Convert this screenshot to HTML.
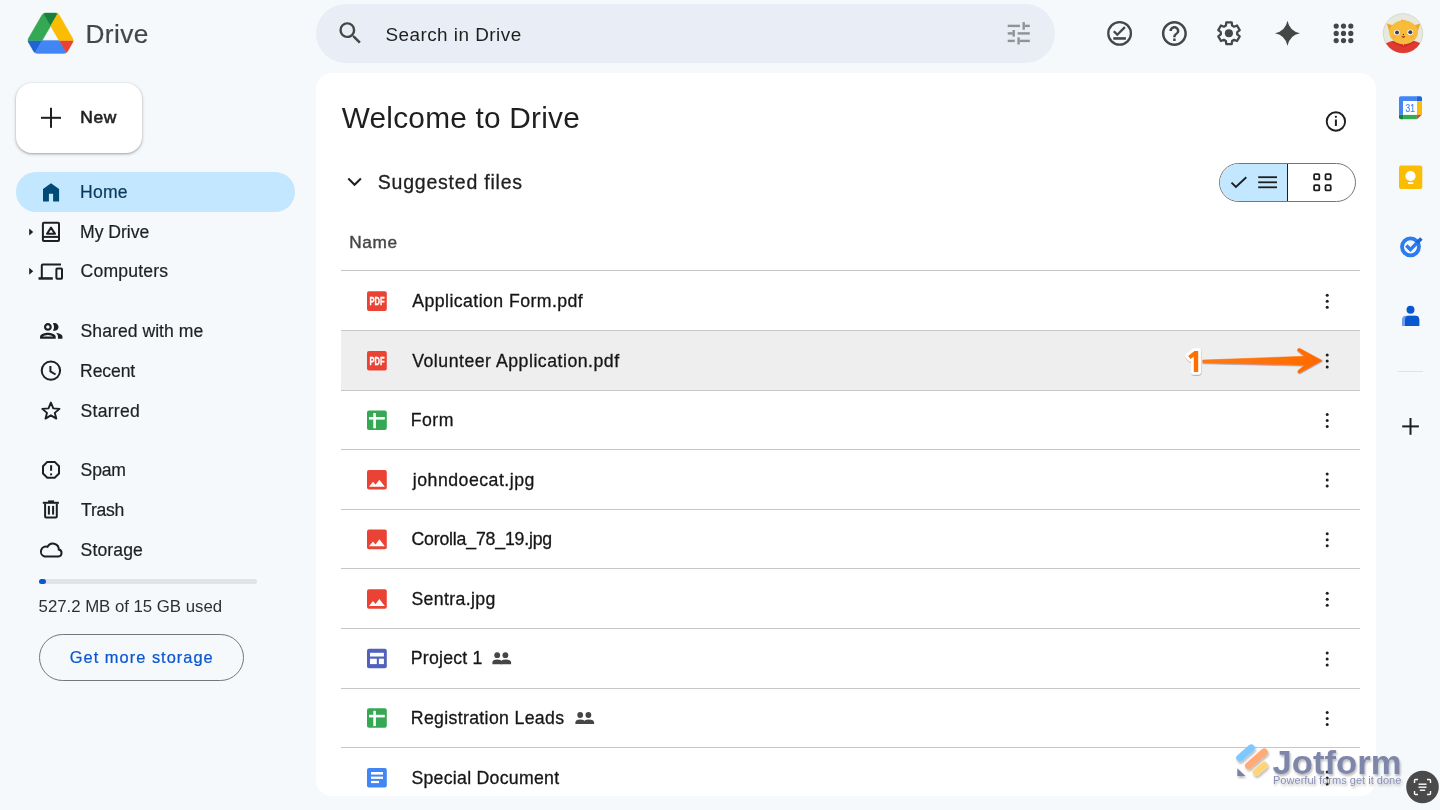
<!DOCTYPE html>
<html><head><meta charset="utf-8">
<style>
*{box-sizing:border-box;margin:0;padding:0}
html,body{width:1440px;height:810px;overflow:hidden;background:#f6f9fc;font-family:"Liberation Sans",sans-serif;color:#1f1f1f}
.abs{position:absolute}
.t{position:absolute;white-space:nowrap;line-height:1;will-change:transform}
svg{position:absolute;display:block;overflow:visible}
</style></head><body>

<!-- Search bar -->
<div class="abs" style="left:316px;top:4px;width:739px;height:59px;border-radius:29.5px;background:#e9eef6"></div>

<!-- New button -->
<div class="abs" style="left:16px;top:83px;width:126px;height:70px;border-radius:16px;background:#fff;box-shadow:0 1px 2px rgba(60,64,67,.3),0 1px 3px 1px rgba(60,64,67,.15)"></div>

<!-- Home pill -->
<div class="abs" style="left:16px;top:172px;width:279px;height:40px;border-radius:20px;background:#c2e7ff"></div>

<!-- storage bar -->
<div class="abs" style="left:38.5px;top:579px;width:218px;height:5px;border-radius:3px;background:#e3e3e3"></div>
<div class="abs" style="left:38.5px;top:579px;width:7.5px;height:5px;border-radius:3px;background:#0b57d0"></div>
<!-- get more storage btn -->
<div class="abs" style="left:38.5px;top:634px;width:205px;height:47px;border-radius:24px;border:1px solid #747775"></div>

<!-- Main card -->
<div class="abs" style="left:316px;top:73px;width:1060px;height:723.3px;border-radius:16px;background:#fff"></div>

<!-- highlighted row -->
<div class="abs" style="left:341px;top:330.5px;width:1019px;height:59.6px;background:#eeeeee"></div>
<!-- dividers -->
<div class="abs" style="left:341px;top:270.46px;width:1019px;height:1px;background:#c7c7c7"></div>
<div class="abs" style="left:341px;top:330.03px;width:1019px;height:1px;background:#c7c7c7"></div>
<div class="abs" style="left:341px;top:389.6px;width:1019px;height:1px;background:#c7c7c7"></div>
<div class="abs" style="left:341px;top:449.17px;width:1019px;height:1px;background:#c7c7c7"></div>
<div class="abs" style="left:341px;top:508.74px;width:1019px;height:1px;background:#c7c7c7"></div>
<div class="abs" style="left:341px;top:568.3px;width:1019px;height:1px;background:#c7c7c7"></div>
<div class="abs" style="left:341px;top:627.9px;width:1019px;height:1px;background:#c7c7c7"></div>
<div class="abs" style="left:341px;top:687.5px;width:1019px;height:1px;background:#c7c7c7"></div>
<div class="abs" style="left:341px;top:747.0px;width:1019px;height:1px;background:#c7c7c7"></div>

<!-- view toggle -->
<div class="abs" style="left:1219px;top:162.5px;width:137px;height:39.5px;border-radius:20px;border:1px solid #747775;overflow:hidden;background:#fff">
  <div class="abs" style="left:0;top:0;width:68px;height:100%;background:#c2e7ff;border-right:1px solid #1f1f1f"></div>
</div>

<!-- right panel divider -->
<div class="abs" style="left:1398px;top:371px;width:25px;height:1px;background:#dde3ea"></div>

<!-- Drive logo -->
<svg style="left:28.3px;top:12.8px" width="45.2" height="40.4" viewBox="0 0 87.3 78">
<path d="m6.6 66.85 3.85 6.65c.8 1.4 1.95 2.5 3.3 3.3l13.75-23.8h-27.5c0 1.55.4 3.1 1.2 4.5z" fill="#1e64d2" stroke="#1e64d2" stroke-width="0.8"/>
<path d="m43.65 25-13.75-23.8c-1.35.8-2.5 1.9-3.3 3.3l-25.4 44a9.06 9.06 0 0 0 -1.2 4.5h27.5z" fill="#34a853" stroke="#34a853" stroke-width="0.8"/>
<path d="m73.55 76.8c1.35-.8 2.5-1.9 3.3-3.3l1.6-2.75 7.65-13.25c.8-1.4 1.2-2.95 1.2-4.5h-27.502l5.852 11.5z" fill="#ea4335" stroke="#ea4335" stroke-width="0.8"/>
<path d="m43.65 25 13.75-23.8c-1.35-.8-2.9-1.2-4.5-1.2h-18.5c-1.6 0-3.15.45-4.5 1.2z" fill="#188038" stroke="#188038" stroke-width="0.8"/>
<path d="m59.8 53h-32.3l-13.75 23.8c1.35.8 2.9 1.2 4.5 1.2h50.8c1.6 0 3.15-.45 4.5-1.2z" fill="#4285f4" stroke="#4285f4" stroke-width="0.8"/>
<path d="m73.4 26.5-12.7-22c-.8-1.4-1.95-2.5-3.3-3.3l-13.75 23.8 16.15 28h27.45c0-1.55-.4-3.1-1.2-4.5z" fill="#fbbc04" stroke="#fbbc04" stroke-width="0.8"/>
</svg>

<!-- page-coordinate icon layer -->
<svg style="left:0;top:0;will-change:transform" width="1440" height="810" viewBox="0 0 1440 810">
  <!-- search icon -->
  <path transform="translate(335.7 18.5) scale(1.224)" fill="#444746" d="M15.5 14h-.79l-.28-.27A6.471 6.471 0 0 0 16 9.5 6.5 6.5 0 1 0 9.5 16c1.61 0 3.09-.59 4.23-1.57l.27.28v.79l5 4.99L20.49 19l-4.99-5zm-6 0C7.01 14 5 11.99 5 9.5S7.01 5 9.5 5 14 7.01 14 9.5 11.99 14 9.5 14z"/>
  <!-- tune icon -->
  <g fill="#8f9296">
    <rect x="1007.7" y="24.7" width="12.3" height="2.4"/><rect x="1024.9" y="24.7" width="4.9" height="2.4"/><rect x="1022.5" y="22.1" width="2.4" height="7.6"/>
    <rect x="1007.7" y="32.2" width="5" height="2.4"/><rect x="1012.5" y="30" width="2.4" height="6.6"/><rect x="1017.6" y="32.2" width="12.2" height="2.4"/>
    <rect x="1007.7" y="39.7" width="7.1" height="2.4"/><rect x="1017.4" y="37.4" width="2.4" height="7.1"/><rect x="1019.8" y="39.7" width="10" height="2.4"/>
  </g>
  <!-- offline icon -->
  <g stroke="#444746" fill="none" stroke-width="2.3">
    <circle cx="1119.6" cy="33.4" r="11.3"/>
    <polyline points="1113.8,31.2 1117.3,34.7 1124.9,27.1"/>
    <line x1="1113.3" y1="38.45" x2="1125.9" y2="38.45" stroke-width="2.6"/>
  </g>
  <!-- help icon -->
  <path transform="translate(1159.4 18.4) scale(1.25)" fill="#444746" d="M11 18h2v-2h-2v2zm1-16C6.48 2 2 6.48 2 12s4.48 10 10 10 10-4.48 10-10S17.52 2 12 2zm0 18c-4.41 0-8-3.59-8-8s3.59-8 8-8 8 3.59 8 8-3.59 8-8 8zm0-14c-2.21 0-4 1.79-4 4h2c0-1.1.9-2 2-2s2 .9 2 2c0 2-3 1.75-3 5h2c0-2.25 3-2.5 3-5 0-2.21-1.79-4-4-4z"/>
  <!-- gear icon -->
  <path fill="none" stroke="#444746" stroke-width="2.3" stroke-linejoin="round" d="M1225.89 25.55 L1226.30 22.43 L1231.70 22.43 L1232.11 25.55 L1234.11 26.71 L1237.02 25.50 L1239.72 30.18 L1237.22 32.09 L1237.22 34.41 L1239.72 36.32 L1237.02 41.00 L1234.11 39.79 L1232.11 40.95 L1231.70 44.07 L1226.30 44.07 L1225.89 40.95 L1223.89 39.79 L1220.98 41.00 L1218.28 36.32 L1220.78 34.41 L1220.78 32.09 L1218.28 30.18 L1220.98 25.50 L1223.89 26.71z"/>
  <circle cx="1228.9" cy="33.3" r="4.05" fill="#444746"/>
  <!-- sparkle -->
  <path transform="translate(1275 20.8) scale(1.04)" fill="#444746" d="M12 0Q14 10 24 12Q14 14 12 24Q10 14 0 12Q10 10 12 0z"/>
  <!-- apps grid -->
  <g fill="#444746">
    <circle cx="1336.2" cy="26.1" r="2.6"/><circle cx="1343.5" cy="26.1" r="2.6"/><circle cx="1350.8" cy="26.1" r="2.6"/>
    <circle cx="1336.2" cy="33.4" r="2.6"/><circle cx="1343.5" cy="33.4" r="2.6"/><circle cx="1350.8" cy="33.4" r="2.6"/>
    <circle cx="1336.2" cy="40.6" r="2.6"/><circle cx="1343.5" cy="40.6" r="2.6"/><circle cx="1350.8" cy="40.6" r="2.6"/>
  </g>
  <!-- avatar -->
  <defs><clipPath id="av"><circle cx="1403" cy="33.4" r="19.7"/></clipPath></defs>
  <circle cx="1403" cy="33.4" r="19.7" fill="#e7e9de" stroke="#cfd2c4" stroke-width="0.8"/>
  <g clip-path="url(#av)">
    <path d="M1384 45 Q1390 39.5 1403.4 40 Q1417 39.5 1422 45 L1423 56 L1383 56z" fill="#e03a30"/>
    <path d="M1393 42 L1403.4 46.5 L1414 42" fill="none" stroke="#b8282a" stroke-width="0.9"/><path d="M1402.4 43.5 L1403.4 46 L1404.4 43.5z" fill="#f5a524"/>
    <path d="M1386.8 23.4 L1395 26 L1390 34z" fill="#f5a524"/>
    <path d="M1420.3 23.6 L1412 26 L1417 34z" fill="#f5a524"/>
    <ellipse cx="1403.6" cy="32.3" rx="14.4" ry="11.8" fill="#f7bd3a"/>
    <path d="M1400.5 21 L1402.2 19.2 L1403.6 20.8 L1405.2 19.8 L1406 21.2z" fill="#f5a524"/>
    <circle cx="1396.9" cy="32.5" r="2.8" fill="#fff"/><circle cx="1410.2" cy="32.2" r="2.8" fill="#fff"/>
    <circle cx="1397" cy="32.6" r="2" fill="#3a3f55"/><circle cx="1410.3" cy="32.3" r="2" fill="#3a3f55"/>
    <circle cx="1403.4" cy="34.6" r="0.7" fill="#222"/>
    <path d="M1401.3 36.3 Q1403.4 39.4 1405.5 36.3z" fill="#a8232b"/>
    <circle cx="1393.9" cy="36.7" r="2" fill="#f6a55a" opacity=".6"/><circle cx="1412.3" cy="36.7" r="2" fill="#f6a55a" opacity=".6"/>
  </g>

  <!-- New plus -->
  <g fill="#1f1f1f"><rect x="41" y="116.8" width="20" height="2"/><rect x="50" y="107.8" width="2" height="20"/></g>

  <!-- nav icons -->
  <path fill="#004a77" d="M43 189.1 L51 183.2 L59.1 189.1 V201.5 H53.1 V193.7 H48.9 V201.5 H43z"/>
  <!-- triangles -->
  <path fill="#1f1f1f" d="M29.2 228.4 L33.2 232 L29.2 235.6z"/>
  <path fill="#1f1f1f" d="M29.2 267.8 L33.2 271.3 L29.2 274.8z"/>
  <!-- my drive -->
  <g fill="none" stroke="#1f1f1f" stroke-width="2">
    <rect x="42.9" y="222.7" width="16.1" height="18.2" rx="1"/>
    <line x1="43" y1="236.9" x2="59" y2="236.9"/>
  </g>
  <path fill="none" stroke="#1f1f1f" stroke-width="2" stroke-linejoin="round" d="M51 227.6 L55 233.8 H47z"/>
  <!-- computers -->
  <g fill="none" stroke="#1f1f1f" stroke-width="2">
    <path d="M41.8 278.4 V265.6 Q41.8 264.6 42.8 264.6 H61"/>
    <rect x="56.4" y="268.5" width="5.6" height="10.2" rx="0.8"/>
  </g>
  <rect x="38.5" y="277.2" width="14.3" height="2.5" fill="#1f1f1f"/>
  <!-- shared -->
  <path transform="translate(37.8 317.4) scale(1.12)" fill="#1f1f1f" d="M9 13.75c-2.34 0-7 1.17-7 3.5V19h14v-1.75c0-2.330-4.66-3.5-7-3.5zM4.34 17c.84-.58 2.87-1.25 4.66-1.250s3.82.67 4.66 1.25H4.34zM9 12c1.93 0 3.5-1.57 3.5-3.5S10.93 5 9 5 5.5 6.57 5.5 8.5 7.07 12 9 12zm0-5c.83 0 1.5.67 1.5 1.5S9.83 10 9 10s-1.5-.67-1.5-1.5S8.170 7 9 7zm7.04 6.81c1.16.84 1.96 1.96 1.96 3.44V19h4v-1.75c0-2.02-3.5-3.17-5.96-3.44zM15 12c1.93 0 3.5-1.57 3.5-3.5S16.93 5 15 5c-.54 0-1.04.13-1.5.35.63.89 1 1.98 1 3.15s-.37 2.26-1 3.15c.46.22.96.35 1.5.35z"/>
  <!-- clock -->
  <g fill="none" stroke="#1f1f1f" stroke-width="2">
    <circle cx="50.9" cy="370.6" r="9.2"/>
    <polyline points="50.4,366 50.4,371.4 55.6,374.5"/>
  </g>
  <!-- star -->
  <path fill="none" stroke="#1f1f1f" stroke-width="1.9" stroke-linejoin="round" d="M50.9 402.6 L53.3 408.4 L59.5 408.9 L54.8 412.9 L56.3 418.6 L50.9 415.4 L45.5 418.6 L47 412.9 L42.3 408.9 L48.5 408.4z"/>
  <!-- spam -->
  <path fill="none" stroke="#1f1f1f" stroke-width="2" d="M47.3 461.9 H54.7 L59 466.2 V473.5 L54.7 477.7 H47.3 L43 473.5 V466.2z"/>
  <rect x="50.1" y="465.2" width="2" height="5.6" fill="#1f1f1f"/>
  <rect x="50.1" y="473.4" width="2" height="1.9" fill="#1f1f1f"/>
  <!-- trash -->
  <g fill="none" stroke="#1f1f1f" stroke-width="2">
    <path d="M45.1 503.5 V516.6 Q45.1 517.6 46.1 517.6 H55.8 Q56.8 517.6 56.8 516.6 V503.5"/>
    <line x1="42.8" y1="502.8" x2="58.9" y2="502.8"/>
    <line x1="48.9" y1="505.9" x2="48.9" y2="514.6"/><line x1="53.1" y1="505.9" x2="53.1" y2="514.6"/>
  </g>
  <rect x="48.1" y="500.4" width="6" height="2" fill="#1f1f1f"/>
  <!-- cloud -->
  <path fill="none" stroke="#1f1f1f" stroke-width="2" d="M44.5 556.5 H58.4 A3.5 3.5 0 0 0 58.8 549.6 A6 6 0 0 0 47.5 546.8 A4.9 4.9 0 0 0 44.5 556.5z"/>

  <!-- main chevron -->
  <polyline points="348.3,178.5 354.6,184.8 360.9,178.5" fill="none" stroke="#1f1f1f" stroke-width="2"/>
  <!-- info icon -->
  <circle cx="1335.9" cy="121.5" r="9.2" fill="none" stroke="#1f1f1f" stroke-width="1.9"/>
  <rect x="1334.9" y="119.5" width="2" height="6.5" fill="#1f1f1f"/>
  <circle cx="1335.9" cy="116.8" r="1.15" fill="#1f1f1f"/>
  <!-- toggle icons -->
  <polyline points="1231.5,182.6 1235.9,187 1246.3,177.3" fill="none" stroke="#1f1f1f" stroke-width="1.9"/>
  <g fill="#1f1f1f"><rect x="1258.2" y="176.3" width="18.8" height="1.8"/><rect x="1258.2" y="181.4" width="18.8" height="1.8"/><rect x="1258.2" y="186.4" width="18.8" height="1.8"/></g>
  <g fill="none" stroke="#1f1f1f" stroke-width="1.8">
    <rect x="1314.1" y="174.2" width="5.2" height="5.2" rx="1"/><rect x="1325.5" y="174.2" width="5.2" height="5.2" rx="1"/>
    <rect x="1314.1" y="185.2" width="5.2" height="5.2" rx="1"/><rect x="1325.5" y="185.2" width="5.2" height="5.2" rx="1"/>
  </g>

  <!-- file icons -->
  <!-- pdf -->
  <g><rect x="367" y="291.3" width="19.8" height="19.6" rx="2" fill="#ea4335"/>
  <text x="377" y="305.2" font-family="Liberation Sans" font-weight="bold" font-size="10.2" fill="#fff" stroke="#fff" stroke-width="0.3" text-anchor="middle" textLength="15" lengthAdjust="spacingAndGlyphs">PDF</text></g>
  <rect x="367" y="351" width="19.8" height="19.6" rx="2" fill="#ea4335"/>
  <text x="377" y="364.9" font-family="Liberation Sans" font-weight="bold" font-size="10.2" fill="#fff" stroke="#fff" stroke-width="0.3" text-anchor="middle" textLength="15" lengthAdjust="spacingAndGlyphs">PDF</text>
  <!-- sheets -->
  <rect x="367" y="410.5" width="19.8" height="19.4" rx="2" fill="#34a853"/>
  <rect x="369" y="417" width="15.8" height="2.6" fill="#fff"/><rect x="373.3" y="413" width="2.6" height="15.3" fill="#fff"/>
  <!-- images -->
  <g><rect x="367" y="470" width="19.8" height="19.6" rx="2" fill="#ea4335"/>
  <path d="M369 486.7 L373 481.8 L375.5 484.8 L379.4 479.7 L384.8 486.7z" fill="#fff"/></g>
  <g transform="translate(0 59.6)"><rect x="367" y="470" width="19.8" height="19.6" rx="2" fill="#ea4335"/>
  <path d="M369 486.7 L373 481.8 L375.5 484.8 L379.4 479.7 L384.8 486.7z" fill="#fff"/></g>
  <g transform="translate(0 119.2)"><rect x="367" y="470" width="19.8" height="19.6" rx="2" fill="#ea4335"/>
  <path d="M369 486.7 L373 481.8 L375.5 484.8 L379.4 479.7 L384.8 486.7z" fill="#fff"/></g>
  <!-- project (purple) -->
  <rect x="367" y="648.7" width="19.8" height="19.5" rx="2" fill="#5262bc"/>
  <rect x="370" y="652.8" width="13.9" height="3.7" fill="#fff"/>
  <rect x="370" y="658.7" width="6.8" height="5.4" fill="#fff"/><rect x="378.9" y="658.7" width="5" height="5.4" fill="#fff"/>
  <!-- sheets 2 -->
  <rect x="367" y="708.3" width="19.8" height="19.4" rx="2" fill="#34a853"/>
  <rect x="369" y="714.8" width="15.8" height="2.6" fill="#fff"/><rect x="373.3" y="710.8" width="2.6" height="15.3" fill="#fff"/>
  <!-- docs -->
  <rect x="367" y="767.9" width="19.8" height="19.7" rx="2" fill="#4285f4"/>
  <rect x="371" y="772" width="12" height="2.6" fill="#fff"/><rect x="371" y="776.6" width="12" height="2.3" fill="#fff"/><rect x="371" y="780.9" width="8" height="2.2" fill="#fff"/>
  <!-- shared people icons -->
  <g fill="#444746">
    <circle cx="497.2" cy="655.2" r="2.9"/><circle cx="505.4" cy="655.2" r="2.9"/>
    <path d="M492.4 664.2 V662.6 Q492.4 659.6 497.2 659.6 Q502 659.6 502 662.6 V664.2z"/>
    <path d="M500.8 664.2 V662.6 Q500.8 659.6 505.6 659.6 Q511.1 659.6 511.1 662.6 V664.2z"/>
  </g>
  <g transform="translate(83 59.8)" fill="#444746">
    <circle cx="497.2" cy="655.2" r="2.9"/><circle cx="505.4" cy="655.2" r="2.9"/>
    <path d="M492.4 664.2 V662.6 Q492.4 659.6 497.2 659.6 Q502 659.6 502 662.6 V664.2z"/>
    <path d="M500.8 664.2 V662.6 Q500.8 659.6 505.6 659.6 Q511.1 659.6 511.1 662.6 V664.2z"/>
  </g>

  <!-- kebabs -->
  <g fill="#1f1f1f"><circle cx="1327.2" cy="295.3" r="1.5"/><circle cx="1327.2" cy="301.3" r="1.5"/><circle cx="1327.2" cy="307.3" r="1.5"/></g>
  <g transform="translate(0 59.6)" fill="#1f1f1f"><circle cx="1327.2" cy="295.3" r="1.5"/><circle cx="1327.2" cy="301.3" r="1.5"/><circle cx="1327.2" cy="307.3" r="1.5"/></g><g transform="translate(0 119.2)" fill="#1f1f1f"><circle cx="1327.2" cy="295.3" r="1.5"/><circle cx="1327.2" cy="301.3" r="1.5"/><circle cx="1327.2" cy="307.3" r="1.5"/></g><g transform="translate(0 178.8)" fill="#1f1f1f"><circle cx="1327.2" cy="295.3" r="1.5"/><circle cx="1327.2" cy="301.3" r="1.5"/><circle cx="1327.2" cy="307.3" r="1.5"/></g><g transform="translate(0 238.4)" fill="#1f1f1f"><circle cx="1327.2" cy="295.3" r="1.5"/><circle cx="1327.2" cy="301.3" r="1.5"/><circle cx="1327.2" cy="307.3" r="1.5"/></g>
  <g transform="translate(0 298)" fill="#1f1f1f"><circle cx="1327.2" cy="295.3" r="1.5"/><circle cx="1327.2" cy="301.3" r="1.5"/><circle cx="1327.2" cy="307.3" r="1.5"/></g><g transform="translate(0 357.6)" fill="#1f1f1f"><circle cx="1327.2" cy="295.3" r="1.5"/><circle cx="1327.2" cy="301.3" r="1.5"/><circle cx="1327.2" cy="307.3" r="1.5"/></g><g transform="translate(0 417.2)" fill="#1f1f1f"><circle cx="1327.2" cy="295.3" r="1.5"/><circle cx="1327.2" cy="301.3" r="1.5"/><circle cx="1327.2" cy="307.3" r="1.5"/></g><g transform="translate(0 476.8)" fill="#1f1f1f"><circle cx="1327.2" cy="295.3" r="1.5"/><circle cx="1327.2" cy="301.3" r="1.5"/><circle cx="1327.2" cy="307.3" r="1.5"/></g>

  <!-- right panel icons -->
  <!-- calendar -->
  <path d="M1399 98 Q1399 96.2 1400.8 96.2 H1416.9 V101.1 H1403.1 V114.7 H1399z" fill="#4285f4"/>
  <path d="M1416.9 96.2 H1420.2 Q1422 96.2 1422 98 V101.1 H1416.9z" fill="#1967d2"/>
  <rect x="1416.9" y="101.1" width="5.1" height="13.6" fill="#fbbc04"/>
  <path d="M1403.1 114.7 H1416.9 V119.2 H1403.1z" fill="#34a853"/>
  <path d="M1399 114.7 H1403.1 V119.2 H1400.8 Q1399 119.2 1399 117.4z" fill="#188038"/>
  <path d="M1416.9 114.7 H1422 L1416.9 119.2z" fill="#ea4335"/>
  <rect x="1403.1" y="101.1" width="13.8" height="13.6" fill="#fff"/>
  <text x="1410.3" y="112.3" font-family="Liberation Sans" font-size="11" fill="#4285f4" stroke="#4285f4" stroke-width="0.2" text-anchor="middle" textLength="9.4" lengthAdjust="spacingAndGlyphs">31</text>
  <!-- keep -->
  <rect x="1399" y="165.4" width="23.3" height="23.6" rx="2" fill="#fbbc04"/>
  <circle cx="1410.5" cy="176" r="5.1" fill="#fff"/>
  <rect x="1408" y="182.2" width="5.2" height="1.8" fill="#fff"/>
  <!-- tasks -->
  <circle cx="1410.5" cy="246.8" r="8.5" fill="none" stroke="#2a7cf0" stroke-width="3.8"/>
  <polyline points="1406.3,245.6 1410.4,249.6 1418.8,241" fill="none" stroke="#2a7cf0" stroke-width="3.5"/>
  <line x1="1417" y1="242.8" x2="1421.4" y2="238.4" stroke="#1b66d8" stroke-width="3.6"/>
  <!-- contacts -->
  <circle cx="1410.5" cy="309.8" r="4" fill="#0b57d0"/>
  <path d="M1402 326 V320 Q1402 315.7 1406 315.7 H1415.3 Q1419.3 315.7 1419.3 320 V326z" fill="#6f9cf0"/>
  <path d="M1405 326 V320 Q1405 315.7 1409 315.7 H1415.3 Q1419.3 315.7 1419.3 320 V326z" fill="#0b57d0"/>
  <!-- plus -->
  <g fill="#1f1f1f"><rect x="1402.2" y="425.4" width="16.7" height="2"/><rect x="1409.5" y="418" width="2" height="16.8"/></g>

  <!-- annotation arrow -->
  <defs><linearGradient id="og" x1="0" x2="1"><stop offset="0" stop-color="#ff7a10"/><stop offset="1" stop-color="#ff6a00"/></linearGradient>
  <filter id="sh" x="-20%" y="-50%" width="140%" height="200%"><feDropShadow dx="0.3" dy="1" stdDeviation="0.6" flood-color="#3a4a6a" flood-opacity="0.45"/></filter></defs>
  <g filter="url(#sh)">
  <path d="M1202.8 360.1 L1304.5 356.3 L1297.6 350.6 Q1297 348.6 1299.4 348.3 L1322.2 360.5 L1299.6 372.9 Q1297.4 373 1297.9 370.7 L1304.5 365.2 L1202.8 362.8z" fill="url(#og)" stroke="#ff6f00" stroke-width="0.6" stroke-linejoin="round"/>
  <path d="M1194.5 350.9 H1198.2 V371.9 H1193.8 V356.6 L1190.6 358.9 L1188.1 356.1z" fill="#ff7000" stroke="#fff" stroke-width="5.5" stroke-linejoin="round" paint-order="stroke"/>
  </g>
</svg>

<svg style="left:0;top:0;will-change:transform" width="1440" height="810" viewBox="0 0 1440 810" font-family="Liberation Sans">
<text x="85.47" y="43.10" font-size="26.2" letter-spacing="0.431" fill="#444746" font-weight="normal" stroke="#444746" stroke-width="0.20">Drive</text>
<text x="385.38" y="40.90" font-size="18.9" letter-spacing="0.473" fill="#1f1f1f" font-weight="normal">Search in Drive</text>
<text x="80.22" y="123.30" font-size="17.4" letter-spacing="0.638" fill="#1f1f1f" font-weight="normal" stroke="#1f1f1f" stroke-width="0.60">New</text>
<text x="80.12" y="198.30" font-size="17.6" letter-spacing="0.150" fill="#0a3a5c" font-weight="normal" stroke="#0a3a5c" stroke-width="0.20">Home</text>
<text x="80.12" y="237.50" font-size="17.6" letter-spacing="-0.036" fill="#1f1f1f" font-weight="normal" stroke="#1f1f1f" stroke-width="0.20">My Drive</text>
<text x="80.62" y="277.00" font-size="17.6" letter-spacing="0.163" fill="#1f1f1f" font-weight="normal" stroke="#1f1f1f" stroke-width="0.20">Computers</text>
<text x="80.62" y="337.00" font-size="17.6" letter-spacing="0.029" fill="#1f1f1f" font-weight="normal" stroke="#1f1f1f" stroke-width="0.20">Shared with me</text>
<text x="80.12" y="376.70" font-size="17.6" letter-spacing="-0.130" fill="#1f1f1f" font-weight="normal" stroke="#1f1f1f" stroke-width="0.20">Recent</text>
<text x="80.62" y="416.80" font-size="17.6" letter-spacing="0.246" fill="#1f1f1f" font-weight="normal" stroke="#1f1f1f" stroke-width="0.20">Starred</text>
<text x="80.62" y="476.30" font-size="17.6" letter-spacing="-0.192" fill="#1f1f1f" font-weight="normal" stroke="#1f1f1f" stroke-width="0.20">Spam</text>
<text x="81.12" y="516.00" font-size="17.6" letter-spacing="-0.312" fill="#1f1f1f" font-weight="normal" stroke="#1f1f1f" stroke-width="0.20">Trash</text>
<text x="80.62" y="555.80" font-size="17.6" letter-spacing="0.104" fill="#1f1f1f" font-weight="normal" stroke="#1f1f1f" stroke-width="0.20">Storage</text>
<text x="38.58" y="611.70" font-size="16.8" letter-spacing="-0.015" fill="#2e2f30" font-weight="normal">527.2 MB of 15 GB used</text>
<text x="69.75" y="662.50" font-size="16.4" letter-spacing="1.030" fill="#0b57d0" font-weight="normal" stroke="#0b57d0" stroke-width="0.24">Get more storage</text>
<text x="341.77" y="127.90" font-size="29.8" letter-spacing="0.225" fill="#1f1f1f" font-weight="normal">Welcome to Drive</text>
<text x="377.73" y="189.20" font-size="19.5" letter-spacing="0.787" fill="#1f1f1f" font-weight="normal" stroke="#1f1f1f" stroke-width="0.30">Suggested files</text>
<text x="349.23" y="247.50" font-size="17.2" letter-spacing="0.633" fill="#444746" font-weight="normal" stroke="#444746" stroke-width="0.40">Name</text>
<text x="412.30" y="306.94" font-size="17.7" letter-spacing="0.434" fill="#161616" font-weight="normal" stroke="#161616" stroke-width="0.30">Application Form.pdf</text>
<text x="412.18" y="366.51" font-size="17.7" letter-spacing="0.510" fill="#161616" font-weight="normal" stroke="#161616" stroke-width="0.30">Volunteer Application.pdf</text>
<text x="410.80" y="426.08" font-size="17.7" letter-spacing="0.458" fill="#161616" font-weight="normal" stroke="#161616" stroke-width="0.30">Form</text>
<text x="412.80" y="485.65" font-size="17.7" letter-spacing="0.496" fill="#161616" font-weight="normal" stroke="#161616" stroke-width="0.30">johndoecat.jpg</text>
<text x="411.43" y="545.23" font-size="17.7" letter-spacing="-0.175" fill="#161616" font-weight="normal" stroke="#161616" stroke-width="0.30">Corolla_78_19.jpg</text>
<text x="411.43" y="604.80" font-size="17.7" letter-spacing="0.372" fill="#161616" font-weight="normal" stroke="#161616" stroke-width="0.30">Sentra.jpg</text>
<text x="410.80" y="664.37" font-size="17.7" letter-spacing="0.225" fill="#161616" font-weight="normal" stroke="#161616" stroke-width="0.30">Project 1</text>
<text x="410.80" y="723.94" font-size="17.7" letter-spacing="0.338" fill="#161616" font-weight="normal" stroke="#161616" stroke-width="0.30">Registration Leads</text>
<text x="411.43" y="783.52" font-size="17.7" letter-spacing="0.273" fill="#161616" font-weight="normal" stroke="#161616" stroke-width="0.30">Special Document</text>
</svg>



<!-- Jotform watermark -->
<svg style="left:0;top:0;will-change:transform" width="1440" height="810" viewBox="0 0 1440 810">
  <defs><filter id="jsh" x="-10%" y="-30%" width="130%" height="170%"><feDropShadow dx="1" dy="2" stdDeviation="1.3" flood-color="#000" flood-opacity="0.28"/></filter></defs>
  <g filter="url(#jsh)">
  <g stroke-linecap="round" fill="none">
    <line x1="1239.8" y1="758" x2="1251.2" y2="748" stroke="#7fc8ff" stroke-width="7.2"/>
    <line x1="1248.6" y1="765.6" x2="1264.2" y2="752" stroke="#ffaa77" stroke-width="7.2"/>
    <line x1="1256.2" y1="772.2" x2="1264.2" y2="765.4" stroke="#ffd47a" stroke-width="7.2"/>
  </g>
  <path d="M1237.3 768.3 L1245.4 776 H1237.3z" fill="#7a80a8"/>
  <text x="1272.6" y="773.6" font-family="Liberation Sans" font-weight="bold" font-size="34" fill="#7e86aa" textLength="129" lengthAdjust="spacingAndGlyphs">Jotform</text>
  <text x="1273" y="783.9" font-family="Liberation Sans" font-size="10.2" fill="#8a90b4" textLength="128.4" lengthAdjust="spacingAndGlyphs">Powerful forms get it done</text>
  </g>
  <circle cx="1422.5" cy="787" r="16.3" fill="#4a4a4a"/>
  <g fill="none" stroke="#fff" stroke-width="1.4">
    <path d="M1414.5 783 V780.5 Q1414.5 779.5 1415.5 779.5 H1418"/><path d="M1427 779.5 H1429.5 Q1430.5 779.5 1430.5 780.5 V783"/>
    <path d="M1414.5 791 V793.5 Q1414.5 794.5 1415.5 794.5 H1418"/><path d="M1427 794.5 H1429.5 Q1430.5 794.5 1430.5 793.5 V791"/>
    <line x1="1418.5" y1="784.2" x2="1426.5" y2="784.2"/><line x1="1418.5" y1="787.2" x2="1426.5" y2="787.2"/><line x1="1419.8" y1="790.2" x2="1425.2" y2="790.2"/>
  </g>
</svg>

</body></html>
